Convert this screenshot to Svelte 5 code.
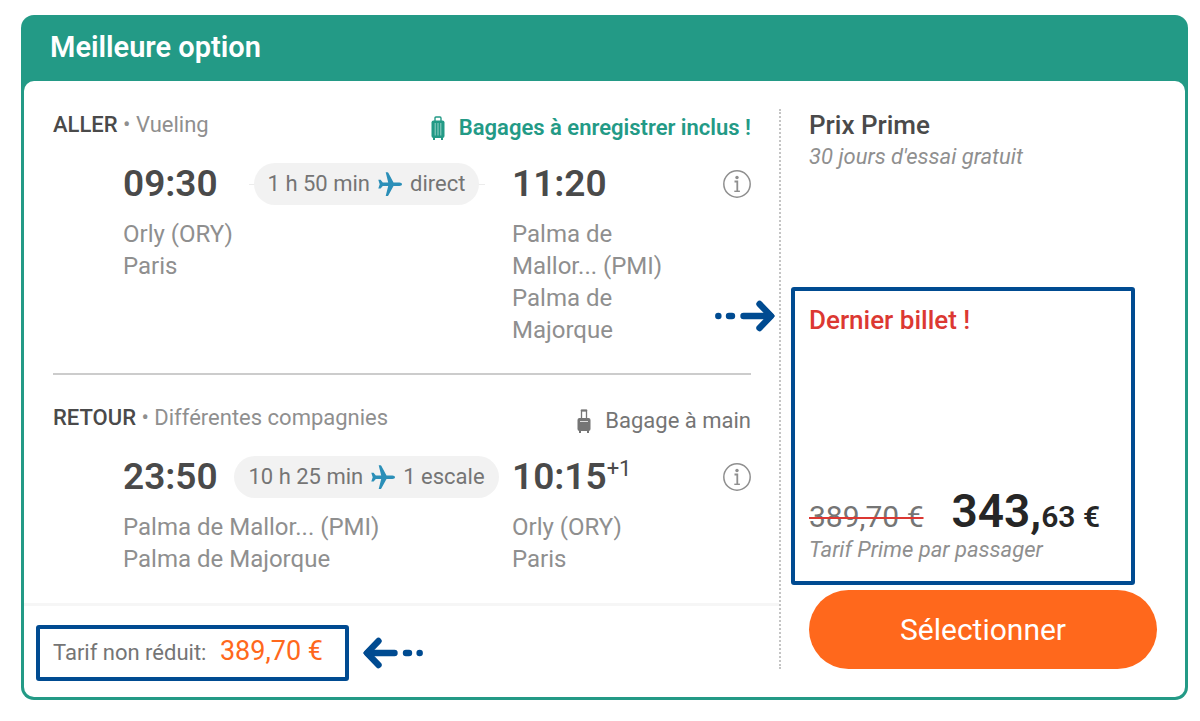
<!-- ABOUTME: Flight result card with both legs of the trip -->
<!-- ABOUTME: Shows the Prime price next to the full fare -->

<script>
  const legs = [
    {
      label: 'ALLER',
      airline: 'Vueling',
      baggage: { type: 'checked', text: 'Bagages à enregistrer inclus !' },
      departure: { time: '09:30', airport: 'Orly (ORY)', city: 'Paris' },
      duration: '1 h 50 min',
      stops: 'direct',
      arrival: { time: '11:20', airport: 'Palma de Mallor... (PMI)', city: 'Palma de Majorque' },
    },
    {
      label: 'RETOUR',
      airline: 'Différentes compagnies',
      baggage: { type: 'cabin', text: 'Bagage à main' },
      departure: { time: '23:50', airport: 'Palma de Mallor... (PMI)', city: 'Palma de Majorque' },
      duration: '10 h 25 min',
      stops: '1 escale',
      arrival: { time: '10:15', dayOffset: '+1', airport: 'Orly (ORY)', city: 'Paris' },
    },
  ];
</script>

{#snippet arrow()}
  <svg viewBox="0 0 60 32" width="60" height="32" fill="none" stroke="currentColor" stroke-width="6.400" stroke-linecap="round" stroke-linejoin="round" aria-hidden="true">
    <path d="M3.300 16h.1M14 16h3M28.500 16h24" />
    <path d="M44.500 4l11.500 12-11.500 12" />
    <path d="M52 9l7.500 7-7.500 7z" fill="currentColor" stroke-width="1" />
  </svg>
{/snippet}

<article class="card">
  <h2>Meilleure option</h2>

  <div class="body">
    <div class="trip">
      <div class="legs">
        {#each legs as leg}
          <section class="leg">
            <div class="leg-header">
              <p><strong>{leg.label}</strong> • {leg.airline}</p>
              <p class="baggage {leg.baggage.type}">
                {#if leg.baggage.type === 'checked'}
                  <svg viewBox="0 0 14 24" width="14" height="24" aria-hidden="true">
                    <path d="M4 5V2.200Q4 1 5 1h4q1 0 1 1.200V5" fill="none" stroke="currentColor" stroke-width="1.400" />
                    <rect x="0.500" y="4.500" width="13" height="17.500" rx="2" fill="currentColor" />
                    <path d="M2 21h2v3H2zM10 21h2v3h-2z" fill="currentColor" />
                    <path d="M4.200 7v12.500M7 7v12.500M9.800 7v12.500" stroke="#a5d8cf" stroke-width="0.900" />
                  </svg>
                {:else}
                  <svg viewBox="0 0 14 24" width="14" height="24" aria-hidden="true">
                    <path d="M4.500 10V1.500h5V10" fill="none" stroke="currentColor" stroke-width="1.300" />
                    <rect x="3.800" y="0.500" width="6.400" height="2" rx="0.800" fill="currentColor" />
                    <rect x="0.500" y="9" width="13" height="13" rx="2" fill="currentColor" />
                    <path d="M2 21h2v3H2zM10 21h2v3h-2z" fill="currentColor" />
                    <path d="M3 12.500h8" stroke="#ddd" stroke-width="1" />
                  </svg>
                {/if}
                {leg.baggage.text}
              </p>
            </div>

            <div class="route">
              <time>{leg.departure.time}</time>
              <div class="duration">
                <span class="pill">
                  {leg.duration}
                  <svg viewBox="0 0 24 24" width="24" height="24" fill="#2b8fb8" aria-hidden="true">
                    <path d="M24 12.200c0-.9-1.200-1.700-2.600-1.700h-5.900L10.300.8Q10 .3 9.500.3H7.700l2.500 10.200H4.800L2.600 7.800H.3l1.400 4.400L.3 16.600h2.300l2.200-2.700h5.400L7.700 24h1.800q.5 0 .8-.5l5.200-9.600h5.900c1.400 0 2.600-.8 2.600-1.700z" />
                  </svg>
                  {leg.stops}
                </span>
              </div>
              <time>{leg.arrival.time}{#if leg.arrival.dayOffset}<sup>{leg.arrival.dayOffset}</sup>{/if}</time>
              <button class="info" type="button" aria-label="Détails du vol">
                <svg viewBox="0 0 28 28" width="28" height="28" fill="none" stroke="currentColor" stroke-width="1.500" aria-hidden="true">
                  <circle cx="14" cy="14" r="13.200" />
                  <path d="M11.500 11.500h2.800v9.500" stroke-width="1.800" />
                  <path d="M11.300 21.300h5.600" stroke-width="1.400" />
                  <circle cx="14" cy="7.500" r="1.700" fill="currentColor" stroke="none" />
                </svg>
              </button>
              <p class="place from">{leg.departure.airport}<br />{leg.departure.city}</p>
              <p class="place to">{leg.arrival.airport}<br />{leg.arrival.city}</p>
            </div>
          </section>
        {/each}
      </div>

      <div class="full-fare">
        <p class="highlight">Tarif non réduit: <span>389,70 €</span></p>
        <span class="arrow">{@render arrow()}</span>
      </div>
    </div>

    <div class="price">
      <h3>Prix Prime</h3>
      <em>30 jours d'essai gratuit</em>
      <div class="offer highlight">
        <span class="arrow">{@render arrow()}</span>
        <p class="last">Dernier billet !</p>
        <div>
          <p class="amounts">
            <s>389,70 €</s>
            <strong><span>343,</span>63 €</strong>
          </p>
          <em>Tarif Prime par passager</em>
        </div>
      </div>
      <button class="select" type="button">Sélectionner</button>
    </div>
  </div>
</article>

<style>
  :global(body) {
    margin: 0;
    background: #fff;
  }

  .card {
    margin: 15px 12px 20px 21px;
    padding: 0 3px 3px;
    border-radius: 13px;
    background: #239a86;
    color: #8f8f8f;
    font-family: Roboto, 'Liberation Sans', sans-serif;
    font-size: 22px;
    line-height: 32px;
  }

  h2,
  h3,
  p {
    margin: 0;
    font-weight: 500;
  }

  p {
    font-weight: 400;
  }

  svg {
    display: block;
    flex: none;
  }

  h2 {
    padding: 16px 26px 18px;
    color: #fff;
    font-size: 29px;
    font-weight: 600;
  }

  .body {
    display: grid;
    grid-template-columns: minmax(0, 1fr) 406px;
    border-radius: 10px;
    background: #fff;
  }

  .trip {
    display: flex;
    flex-direction: column;
  }

  .legs {
    padding: 28px 28px 28px 29px;
    border-bottom: 3px solid #f6f6f6;
  }

  .leg + .leg {
    margin-top: 27px;
    padding-top: 27px;
    border-top: 2px solid #ccc;
  }

  .leg-header {
    display: flex;
    justify-content: space-between;
    height: 35px;
    margin-bottom: 19px;
  }

  .leg-header strong {
    color: #4a4a4a;
    font-weight: 500;
  }

  .baggage {
    display: flex;
    align-items: center;
    align-self: flex-end;
    gap: 14px;
    color: #757575;
  }

  .baggage.checked {
    color: #239a86;
    font-weight: 600;
  }

  .route {
    display: grid;
    grid-template-columns: 98px minmax(0, 1fr) 195px 28px;
    align-items: center;
    column-gap: 16px;
    row-gap: 13px;
    padding-left: 70px;
  }

  time {
    color: #4a4a4a;
    font-size: 37px;
    font-weight: 600;
    line-height: 42px;
    white-space: nowrap;
  }

  sup {
    font-size: 22px;
    font-weight: 400;
    line-height: 0;
  }

  .duration {
    display: flex;
    justify-content: center;
    background: linear-gradient(#ececec, #ececec) center / 236px 1px no-repeat;
  }

  .pill {
    display: flex;
    align-items: center;
    gap: 8px;
    padding: 0 14px;
    border-radius: 21px;
    background: #f2f2f2;
    color: #757575;
    line-height: 42px;
    white-space: nowrap;
  }

  .info {
    padding: 0;
    border: none;
    background: none;
    color: #8f8f8f;
    cursor: pointer;
  }

  .place {
    align-self: start;
    font-size: 24px;
  }

  .from {
    grid-column: 1 / 3;
  }

  .to {
    padding-right: 16px;
  }

  .highlight {
    border: 4px solid #004b91;
    border-radius: 3px;
  }

  .arrow {
    color: #004b91;
  }

  .full-fare {
    display: flex;
    align-items: center;
    gap: 14px;
    padding: 19px 12px 16px;
  }

  .full-fare .highlight {
    padding: 8px 22px 8px 13px;
    color: #757575;
  }

  .full-fare .highlight span {
    margin-left: 8px;
    color: #ff681c;
    font-size: 27px;
    line-height: 1;
  }

  .full-fare .arrow {
    transform: scaleX(-1);
  }

  .price {
    display: flex;
    flex-direction: column;
    margin: 28px 0;
    padding: 0 28px;
    border-left: 2px dotted #c4c4c4;
  }

  h3 {
    color: #4a4a4a;
    font-size: 26px;
  }

  .offer {
    position: relative;
    display: flex;
    flex-direction: column;
    justify-content: space-between;
    min-height: 262px;
    margin: auto 22px 5px -18px;
    padding: 13px 14px 15px;
  }

  .offer .arrow {
    position: absolute;
    top: 9px;
    right: calc(100% + 20px);
  }

  .last {
    color: #dc3832;
    font-size: 26px;
    font-weight: 500;
  }

  .amounts {
    display: flex;
    align-items: baseline;
    gap: 28px;
    line-height: 34px;
    white-space: nowrap;
  }

  s {
    color: #757575;
    font-size: 30px;
    text-decoration: line-through 2px #dc3832;
  }

  .amounts strong {
    color: #262626;
    font-size: 30px;
    font-weight: 600;
  }

  .amounts strong span {
    font-size: 46px;
  }

  .select {
    height: 79px;
    border: none;
    border-radius: 40px;
    background: #ff681c;
    color: #fff;
    font-family: inherit;
    font-size: 30px;
    cursor: pointer;
  }
</style>
